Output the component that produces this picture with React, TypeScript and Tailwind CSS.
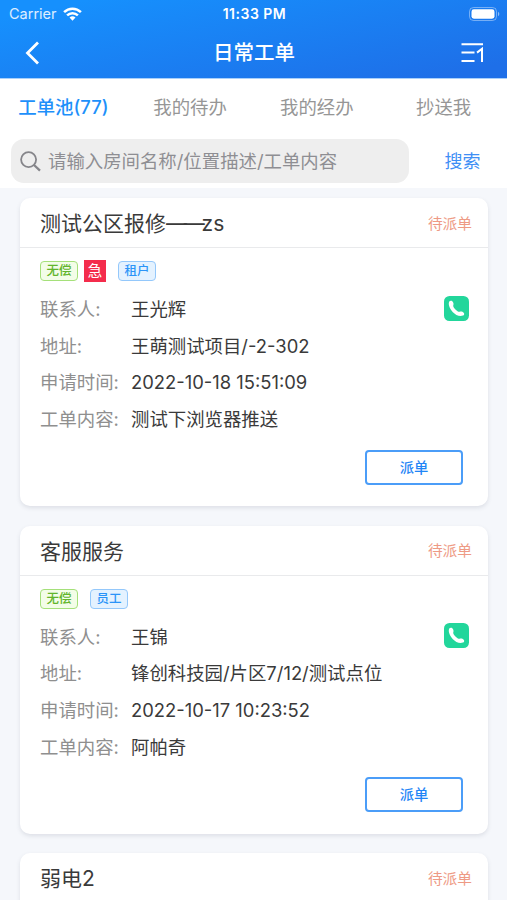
import { useState } from "react";

interface Tag {
  text: string;
  kind: "free" | "urgent" | "source";
}

interface Order {
  id: number;
  title: string;
  status: string;
  detail?: {
    tags: Tag[];
    contact: string;
    address: string;
    time: string;
    content: string;
  };
}

const TABS = ["工单池(77)", "我的待办", "我的经办", "抄送我"];

const ORDERS: Order[] = [
  {
    id: 1,
    title: "测试公区报修——zs",
    status: "待派单",
    detail: {
      tags: [
        { text: "无偿", kind: "free" },
        { text: "急", kind: "urgent" },
        { text: "租户", kind: "source" },
      ],
      contact: "王光辉",
      address: "王萌测试项目/-2-302",
      time: "2022-10-18 15:51:09",
      content: "测试下浏览器推送",
    },
  },
  {
    id: 2,
    title: "客服服务",
    status: "待派单",
    detail: {
      tags: [
        { text: "无偿", kind: "free" },
        { text: "员工", kind: "source" },
      ],
      contact: "王锦",
      address: "锋创科技园/片区7/12/测试点位",
      time: "2022-10-17 10:23:52",
      content: "阿帕奇",
    },
  },
  { id: 3, title: "弱电2", status: "待派单" },
];

const TAG_STYLE: Record<Tag["kind"], string> = {
  free: "h-5 w-[38px] rounded-[4px] border border-[#a5e07a] bg-[#f3fde8] pt-px text-[12.5px] font-medium text-[#62b52c]",
  urgent: "ml-[6px] h-[22px] w-[22px] bg-[#f42c4c] pt-px text-[14.5px] text-white",
  source: "ml-3 h-5 w-[38px] rounded-[4px] border border-[#94c8fb] bg-[#e4f2ff] pt-px text-[12.5px] font-medium text-[#2b94f8]",
};

function StatusBar() {
  return (
    <div className="grid h-[27px] grid-cols-3 items-center pr-[7px] pl-[9px] text-white">
      <div className="flex items-center gap-[6px]">
        <span className="text-[14.5px] text-white/85">Carrier</span>
        <svg width="19" height="14" viewBox="0 0 19 14" fill="none" stroke="currentColor" strokeWidth="2.5">
          <path d="M1.1 5.2a12 12 0 0 1 16.8 0" />
          <path d="M4.1 8.4a7.7 7.7 0 0 1 10.8 0" />
          <path d="M9.5 13.7 6.500 10.6a4.3 4.3 0 0 1 6 0z" fill="currentColor" stroke="none" />
        </svg>
      </div>
      <span className="text-center text-[14px] font-semibold tracking-[0.5px] whitespace-nowrap">11:33 PM</span>
      <svg className="justify-self-end" width="31" height="14" viewBox="0 0 31 14" fill="none">
        <rect x="0.5" y="0.5" width="27" height="13" rx="4" stroke="#fff" strokeOpacity="0.4" />
        <rect x="2.5" y="2.3" width="23" height="9.4" rx="2.4" fill="#fff" />
        <path d="M29 4.8v4.4c1.8-.8 1.8-3.6 0-4.4z" fill="#fff" fillOpacity="0.5" />
      </svg>
    </div>
  );
}

function NavBar() {
  return (
    <div className="flex h-[51px] items-center justify-between pr-[23px] pl-[25px] text-white">
      <svg width="22" height="24" viewBox="0 0 22 24" fill="none" stroke="currentColor" strokeWidth="2.8">
        <path d="M13 1.500 2.500 12 13 22.500" />
      </svg>
      <h1 className="pt-[2px] text-[20.5px] font-medium">日常工单</h1>
      <svg width="23" height="20" viewBox="0 0 23 20" fill="none" stroke="currentColor" strokeWidth="2">
        <path d="M0.500 1.300h21.500M0.500 9.600h13M0.500 18h13" />
        <path d="M16 9.600 21 5.800v13.200" />
      </svg>
    </div>
  );
}

function PhoneIcon() {
  return (
    <svg width="25" height="25" viewBox="0 0 25 25">
      <rect width="25" height="25" rx="5.5" fill="#22d69b" />
      <path
        d="M5.100 5.800C5.700 4.700 7.300 4.300 8.300 5.200c1.200 1.100 1.600 3 .9 4.500 0 1.100 1.200 2.900 2.500 4.100 1.300 1.300 2.800 2.200 3.900 2 1.500-.6 3.100-.1 4.100.9.9 1 .5 2.400-.7 2.900-2 .8-4.400.5-6.600-.7-2.700-1.500-5.100-4-6.500-6.900-1-2.200-1.500-4.400-.8-6.200z"
        fill="#fff"
      />
    </svg>
  );
}

function Row({ label, value, phone }: { label: string; value: string; phone?: boolean }) {
  return (
    <div className="flex h-[36.7px] items-center">
      <span className="w-[91px] shrink-0 pt-[3px] text-[#8f8f8f]">{label}:</span>
      <span className="flex-1 pt-[3px] whitespace-nowrap text-[#3a3a3a]">{value}</span>
      {phone && (
        <button aria-label="phone">
          <PhoneIcon />
        </button>
      )}
    </div>
  );
}

function OrderCard({ order }: { order: Order }) {
  const { detail } = order;
  const [name, suffix] = order.title.split("——");

  return (
    <div className="h-[308px] shrink-0 rounded-[10px] bg-white shadow-[0_2px_4px_rgba(60,70,90,0.13)]">
      <div className="flex h-[50px] items-center justify-between border-b border-[#e9eaec] pr-4 pl-5">
        <h2 className="pt-[3px] text-[21px] text-[#3a3a3a]">
          {name}
          {suffix && <span className="tracking-[-3.2px]">——</span>}
          {suffix}
        </h2>
        <span className="pt-[3px] text-[14.7px] text-[#ee9a84]">{order.status}</span>
      </div>
      {detail && (
        <div className="pr-[19px] pl-5 text-[18.4px]">
          <div className="mt-3 flex h-[22px] items-center">
            {detail.tags.map((t) => (
              <span key={t.text} className={`flex items-center justify-center leading-none ${TAG_STYLE[t.kind]}`}>
                {t.text}
              </span>
            ))}
          </div>
          <div className="mt-2">
            <Row label="联系人" value={detail.contact} phone />
            <Row label="地址" value={detail.address} />
            <Row label="申请时间" value={detail.time} />
            <Row label="工单内容" value={detail.content} />
          </div>
          <div className="mt-[13px] flex justify-end pr-[6px]">
            <button className="h-[35px] w-[98px] rounded-[4px] border-2 border-[#4b9df8] text-[14.3px] font-medium text-[#1f86f6]">
              派单
            </button>
          </div>
        </div>
      )}
    </div>
  );
}

export default function App() {
  const [tab, setTab] = useState(0);

  return (
    <div className="flex h-[900px] w-[507px] flex-col overflow-hidden bg-[#f5f7fb] font-[Inter,'Noto_Sans_CJK_SC',sans-serif]">
      <header className="h-[79px] shrink-0 border-b border-[#a9d0fb] bg-[linear-gradient(168deg,#1690fd_10%,#1e6fe8_92%)]">
        <StatusBar />
        <NavBar />
      </header>

      <div className="h-[109px] shrink-0 bg-white">
        <nav className="flex h-[57px] items-center">
          {TABS.map((t, i) => (
            <button
              key={t}
              onClick={() => setTab(i)}
              className={`flex-1 basis-0 text-center text-[18.4px] whitespace-nowrap ${i === tab ? "font-medium text-[#1e90fa]" : "text-[#969696]"}`}
            >
              {t}
            </button>
          ))}
        </nav>
        <div className="mt-[3px] flex items-center pl-[11px]">
          <div className="flex h-11 w-[398px] items-center rounded-[13px] bg-[#eeeeee] pl-[9px] text-[18.4px] text-[#8e8e93]">
            <svg width="21" height="21" viewBox="0 0 21 21" fill="none" stroke="#85858a" strokeWidth="1.8">
              <circle cx="8.6" cy="8.6" r="7.5" />
              <path d="m14 14 6 5.6" strokeWidth="2.3" />
            </svg>
            <span className="ml-[7px] pt-[2px] whitespace-nowrap">请输入房间名称/位置描述/工单内容</span>
          </div>
          <button className="flex-1 pt-px pl-[9px] text-[18px] text-[#3f8ff5]">搜索</button>
        </div>
      </div>

      <main className="flex flex-col gap-[19.5px] pt-[10px] pr-[19px] pl-5">
        {ORDERS.map((o) => (
          <OrderCard key={o.id} order={o} />
        ))}
      </main>
    </div>
  );
}
